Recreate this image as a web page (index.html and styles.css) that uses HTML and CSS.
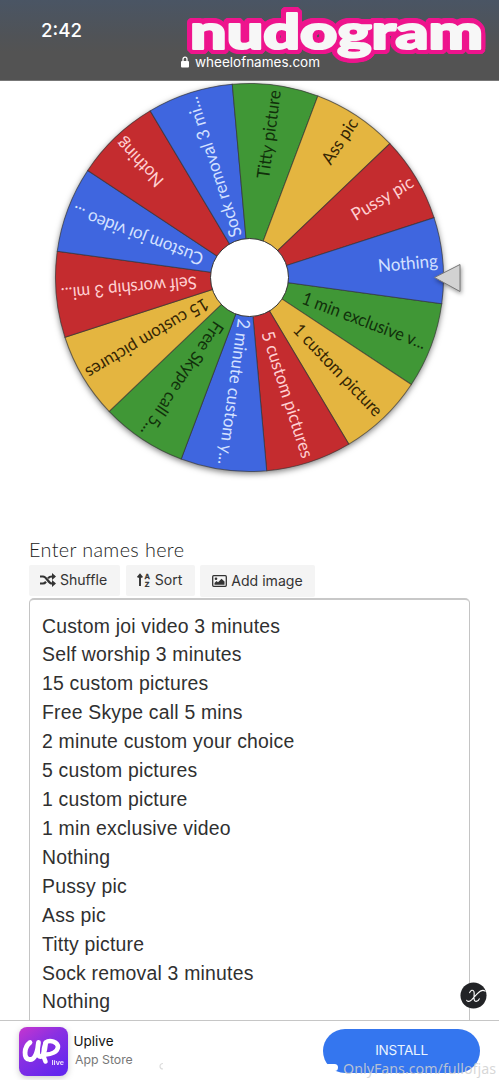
FILE: index.html
```
<!DOCTYPE html>
<html lang="en">
<head>
<meta charset="utf-8">
<title>Wheel of Names</title>
<link rel="stylesheet" href="styles.css">
</head>
<body>
<div class="screen">
  <header class="browser-bar">
    <time class="clock">2:42</time>
    <div class="address">
      <svg class="lock" viewBox="0 0 8 12"><path d="M2 5V3.2a2 2 0 0 1 4 0V5" fill="none" stroke="#fff" stroke-width="1.3"/><rect x="0" y="5" width="8" height="6.5" rx="1" fill="#fff"/></svg>
      <span>wheelofnames.com</span>
    </div>
    <svg class="brand" viewBox="0 0 314 68">
      <text x="10" y="48.500" font-size="47" textLength="293" lengthAdjust="spacingAndGlyphs">nudogram</text>
    </svg>
  </header>

  <main class="page">
    <svg class="wheel" viewBox="0 0 499 452">
      <defs><path id="slice" d="M0 0L189.14 -43.17A194 194 0 0 1 189.14 43.17Z"/></defs>
      <g transform="translate(249.5 197.5)">
        <circle class="wheel-shadow" r="194"/>
        <g class="green" transform="rotate(20.63)"><use href="#slice"/><text x="188" y="6" textLength="131" lengthAdjust="spacingAndGlyphs">1 min exclusive v...</text></g>
        <g class="yellow" transform="rotate(46.34)"><use href="#slice"/><text x="188" y="6" textLength="120" lengthAdjust="spacingAndGlyphs">1 custom picture</text></g>
        <g class="red" transform="rotate(72.06)"><use href="#slice"/><text x="189" y="6" textLength="132" lengthAdjust="spacingAndGlyphs">5 custom pictures</text></g>
        <g class="blue" transform="rotate(97.77)"><use href="#slice"/><text x="189" y="6" textLength="147" lengthAdjust="spacingAndGlyphs">2 minute custom y...</text></g>
        <g class="green" transform="rotate(123.49)"><use href="#slice"/><text x="189" y="6" textLength="134" lengthAdjust="spacingAndGlyphs">Free Skype call 5...</text></g>
        <g class="yellow" transform="rotate(149.2)"><use href="#slice"/><text x="189" y="6" textLength="140" lengthAdjust="spacingAndGlyphs">15 custom pictures</text></g>
        <g class="red" transform="rotate(174.91)"><use href="#slice"/><text x="189" y="6" textLength="136" lengthAdjust="spacingAndGlyphs">Self worship 3 mi...</text></g>
        <g class="blue" transform="rotate(200.63)"><use href="#slice"/><text x="189" y="6" textLength="139" lengthAdjust="spacingAndGlyphs">Custom joi video ...</text></g>
        <g class="red" transform="rotate(226.34)"><use href="#slice"/><text x="189" y="6" textLength="60" lengthAdjust="spacingAndGlyphs">Nothing</text></g>
        <g class="blue" transform="rotate(252.06)"><use href="#slice"/><text x="189" y="6" textLength="146" lengthAdjust="spacingAndGlyphs">Sock removal 3 mi...</text></g>
        <g class="green" transform="rotate(277.77)"><use href="#slice"/><text x="189" y="6" textLength="89" lengthAdjust="spacingAndGlyphs">Titty picture</text></g>
        <g class="yellow" transform="rotate(303.49)"><use href="#slice"/><text x="189" y="6" textLength="51" lengthAdjust="spacingAndGlyphs">Ass pic</text></g>
        <g class="red" transform="rotate(329.2)"><use href="#slice"/><text x="189" y="6" textLength="69" lengthAdjust="spacingAndGlyphs">Pussy pic</text></g>
        <g class="blue" transform="rotate(354.91)"><use href="#slice"/><text x="189" y="6" textLength="60" lengthAdjust="spacingAndGlyphs">Nothing</text></g>
        <circle class="hub" r="39"/>
        <path class="pointer" d="M185 0L210.500 -13V14Z"/>
      </g>
    </svg>

    <section class="editor">
      <h1 class="title">Enter names here</h1>
      <div class="tools">
        <button class="tool shuffle">
          <svg width="16" height="14" viewBox="0 0 16 14" fill="none" stroke="#333" stroke-width="2.200"><path d="M0 3.500H3C7 3.500 8 10.500 12 10.500H13M0 10.500H3C4.300 10.500 5.200 9.700 6 8.700M8 5.200C9 4.100 10 3.500 12 3.500H13"/><path d="M12 0L16 3.500L12 7ZM12 7L16 10.500L12 14Z" fill="#333" stroke="none"/></svg>
          <span>Shuffle</span>
        </button>
        <button class="tool sort">
          <svg width="14" height="14" viewBox="0 0 14 14"><path d="M3 13V3M.7 4.500L3 1.800L5.300 4.500" fill="none" stroke="#333" stroke-width="1.900"/><text x="7.500" y="6.300">A</text><text x="7.700" y="13.500">Z</text></svg>
          <span>Sort</span>
        </button>
        <button class="tool image">
          <svg width="15" height="12" viewBox="0 0 15 12"><rect x=".7" y=".7" width="13.600" height="10.600" rx="1" fill="none" stroke="#333" stroke-width="1.300"/><circle cx="4" cy="3.800" r="1.300" fill="#333"/><path d="M2.500 9.700V8L4.500 6L6 7.200L9.500 3.700L12.500 6.500V9.700Z" fill="#333"/></svg>
          <span>Add image</span>
        </button>
      </div>
      <div class="names">
        <div>Custom joi video 3 minutes</div>
        <div>Self worship 3 minutes</div>
        <div>15 custom pictures</div>
        <div>Free Skype call 5 mins</div>
        <div>2 minute custom your choice</div>
        <div>5 custom pictures</div>
        <div>1 custom picture</div>
        <div>1 min exclusive video</div>
        <div>Nothing</div>
        <div>Pussy pic</div>
        <div>Ass pic</div>
        <div>Titty picture</div>
        <div>Sock removal 3 minutes</div>
        <div>Nothing</div>
      </div>
    </section>
  </main>

  <svg class="close" viewBox="0 0 28 28"><circle cx="14" cy="14" r="13.500" fill="#222326"/><path d="M10 11C11 8.500 13.500 7.500 14.500 10C15.500 13 13 19.500 16 20C18 20.300 19.500 19 20 17.500M26 9.500C23.500 7.500 20.500 9.500 18 12L12 18.500C10 20.500 7.500 20.500 7 19" fill="none" stroke="#fff" stroke-width="1.200" stroke-linecap="round"/></svg>

  <footer class="ad">
    <svg class="app-icon" viewBox="0 0 49 49">
      <defs><linearGradient id="violet" x1="0" y1="0" x2=".7" y2="1"><stop offset="0" stop-color="#c635cf"/><stop offset=".45" stop-color="#8a30e2"/><stop offset="1" stop-color="#6427ee"/></linearGradient></defs>
      <rect width="49" height="49" rx="8" fill="url(#violet)"/>
      <g fill="none" stroke="#fff" stroke-linecap="round" stroke-linejoin="round"><path d="M11 15.500C5 20 4 31.500 10.500 32.500C16 33 18.500 25 19.500 15.500C18 24 18 30 22 29.500C25 29 26 23 26.500 17" stroke-width="4.800"/><path d="M26.500 16C24 23 23.500 29 26.500 34.500M26.500 15.500C31 12 39 15 39 20C38.500 25 32 27.500 27 27.500" stroke-width="4.500"/></g>
      <text x="32.500" y="37.500" textLength="12.500">live</text>
    </svg>
    <div class="app-copy"><strong>Uplive</strong><span>App Store</span></div>
    <svg class="ad-mark" viewBox="0 0 30 10"><path d="M4 1.500C0 1.500 0 7 4 7" fill="none" stroke="#ddd" stroke-width="1.200"/></svg>
    <div class="install">INSTALL</div>
    <span class="smudge"></span>
    <svg class="watermark" viewBox="0 0 156 22"><text x="0" y="16" textLength="153" lengthAdjust="spacingAndGlyphs">OnlyFans.com/fullofjas</text></svg>
  </footer>
</div>
</body>
</html>
```
FILE: styles.css
```
* { box-sizing: border-box; }
body { margin: 0; background: #fff; color: #333; font-family: "Liberation Sans", Arial, sans-serif; }
.screen { position: relative; width: 499px; height: 1080px; overflow: hidden; }
.browser-bar { position: relative; height: 81px; padding-top: 19px; background: linear-gradient(#4a5564 0, #505357 45%, #535353 65%, #535353 100%); border-bottom: 1px solid #777; color: #fff; }
.clock { display: block; margin-left: 41px; font: 500 18.700px/23px Inter, sans-serif; }
.address { display: flex; align-items: center; gap: 6px; height: 20px; margin: 10px 0 0 181px; font: 13.500px/20px Inter, sans-serif; }
.lock { width: 8px; height: 12px; }
.brand { position: absolute; left: 180px; top: 0; width: 314px; height: 68px; overflow: visible; font-family: Lato, sans-serif; font-weight: 900; }
.brand text { fill: #f7f7f7; stroke: #f7f7f7; stroke-width: 2.200px; stroke-linejoin: round; filter: drop-shadow(2px 0 #ee148d) drop-shadow(-2px 0 #ee148d) drop-shadow(0 2px #ee148d) drop-shadow(0 -2px #ee148d) drop-shadow(1.500px 1.500px #ee148d) drop-shadow(-1.500px -1.500px #ee148d) drop-shadow(1px -1px #ee148d) drop-shadow(-1px 1px #ee148d); }
.page { height: 939px; overflow: hidden; }
.wheel { display: block; width: 499px; height: 452px; margin-top: -1px; font: 17.600px Lato, sans-serif; }
.wheel text { text-anchor: end; }
.wheel use { stroke: #333; stroke-opacity: .65; stroke-width: 1px; }
.wheel-shadow { fill: #aaa; filter: drop-shadow(0 2px 3px #0008); }
.blue { fill: #3f66df; } .blue text { fill: #d4e1ff; }
.red { fill: #c42c2f; } .red text { fill: #ffd0d2; }
.green { fill: #409736; } .green text { fill: #11300b; }
.yellow { fill: #e4b540; } .yellow text { fill: #352604; }
.hub { fill: #fff; stroke: #333; stroke-width: 1px; }
.pointer { fill: #d2d2d2; stroke: #777; stroke-width: 1px; filter: drop-shadow(1px 2px 2px #0006); }
.editor { padding: 6px 29px 0; }
.title { height: 27px; margin: 0; color: #222; font: 300 19.800px/22px Lato, sans-serif; letter-spacing: .38px; }
.tools { display: flex; gap: 6px; height: 33px; }
.tool { display: flex; align-items: center; justify-content: center; gap: 4px; height: 31px; padding: 0 2px 2px 0; border: 0; border-radius: 2px; background: #f4f4f4; color: #333; font: 14.100px Inter, sans-serif; }
.shuffle { width: 91px; } .sort { width: 69px; } .image { width: 115px; height: 32px; margin: 0 0 0 -1px; padding: 0 0 1px; }
.sort text { font: bold 7.500px "Liberation Sans", sans-serif; fill: #333; stroke: #333; stroke-width: .3px; }
.names { width: 441px; height: 460px; padding: 11.500px 12px; border: 1px solid #c4c4c4; border-top: 2px solid #c8c8c8; border-radius: 5px 5px 0 0; color: #303030; font-size: 19.400px; letter-spacing: .21px; line-height: 28.920px; }
.close { position: absolute; left: 460px; top: 982px; width: 27px; height: 27px; }
.ad { position: relative; display: flex; height: 60px; padding: 6px 19px 0; border-top: 1px solid #c6c6c6; background: #fff; }
.app-icon { width: 49px; height: 49px; overflow: visible; filter: drop-shadow(0 2px 3px #0003); }
.app-icon text { fill: #eee0ff; font: bold 7.500px "Liberation Sans", sans-serif; }
.app-copy { display: flex; flex-direction: column; gap: 1px; padding: 5px 0 0 5.500px; font-family: Inter, sans-serif; }
.app-copy strong { color: #111; font-weight: 400; font-size: 13.500px; line-height: 18px; }
.app-copy span { padding-left: 1.500px; color: #777; font-size: 12.300px; line-height: 18px; }
.ad-mark { width: 30px; height: 10px; margin: 35px 0 0 26px; }
.install { width: 157px; height: 44px; margin: 2px 0 0 auto; border-radius: 22px; background: #3476ef; color: #e9f4ff; font: 13.500px/42px Inter, sans-serif; letter-spacing: -.3px; text-align: center; }
.smudge { position: absolute; left: 325px; top: 43px; width: 13px; height: 7px; border-radius: 4px; background: #fff; }
.watermark { position: absolute; left: 343px; top: 37px; width: 156px; height: 22px; overflow: visible; fill: #d0d0d0; fill-opacity: .85; font: 15px "Noto Sans", sans-serif; }
```
